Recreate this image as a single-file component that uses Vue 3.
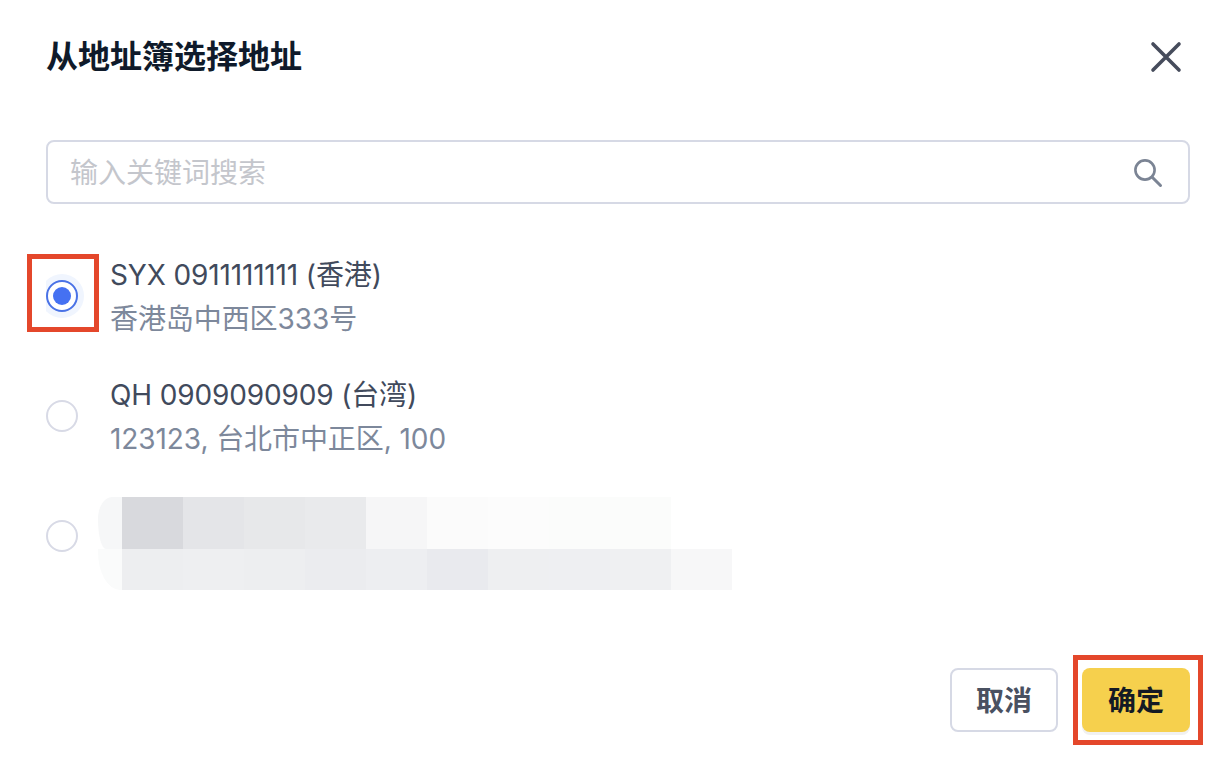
<script setup>
const addresses = [
  { id: 1, name: 'SYX 0911111111 (香港)', detail: '香港岛中西区333号', selected: true },
  { id: 2, name: 'QH 0909090909 (台湾)', detail: '123123, 台北市中正区, 100', selected: false }
]
const topCells = ['#d8d9dd', '#e4e5e8', '#e7e8ea', '#e9eaec', '#f6f6f7', '#fbfbfb', '#fcfcfc', '#fbfcfb', '#fbfcfb', '#ffffff']
const bottomCells = ['#edeef0', '#eeeff1', '#edeef0', '#ebecef', '#edeef1', '#e9eaee', '#eeeff1', '#eeeff2', '#eff0f2', '#f7f7f8']
</script>

<template>
  <div class="dialog">
    <header class="head">
      <h1 class="title">从地址簿选择地址</h1>
      <svg class="close" width="32" height="32" viewBox="0 0 32 32" aria-label="关闭">
        <path d="M3 3 L29 29 M29 3 L3 29" fill="none" stroke="#464c5c" stroke-width="3.6" stroke-linecap="round" />
      </svg>
    </header>

    <div class="search">
      <span class="placeholder">输入关键词搜索</span>
      <svg class="search-icon" width="32" height="32" viewBox="0 0 32 32" aria-hidden="true">
        <circle cx="13" cy="13" r="9.6" fill="none" stroke="#7b8494" stroke-width="2.6" />
        <path d="M20 20 L28.5 28.5" fill="none" stroke="#7b8494" stroke-width="3" stroke-linecap="round" />
      </svg>
    </div>

    <ul class="list">
      <li v-for="item in addresses" :key="item.id" class="row">
        <span class="radio-wrap">
          <span v-if="item.selected" class="halo"></span>
          <span class="radio" :class="{ on: item.selected }"></span>
          <span v-if="item.selected" class="mark mark-radio"></span>
        </span>
        <div class="text">
          <div class="name">{{ item.name }}</div>
          <div class="detail">{{ item.detail }}</div>
        </div>
      </li>
      <li class="row">
        <span class="radio-wrap"><span class="radio"></span></span>
        <div class="mosaic">
          <div class="mosaic-cap">
            <span class="cap-top"></span>
            <span class="cap-bottom"></span>
          </div>
          <div class="mosaic-grid">
            <span v-for="(c, i) in topCells" :key="'t' + i" class="cell top" :style="{ background: c }"></span>
            <span v-for="(c, i) in bottomCells" :key="'b' + i" class="cell bottom" :style="{ background: c }"></span>
          </div>
        </div>
      </li>
    </ul>

    <footer class="foot">
      <button class="btn cancel" type="button">取消</button>
      <span class="confirm-wrap">
        <button class="btn confirm" type="button">确定</button>
        <span class="mark mark-btn"></span>
      </span>
    </footer>
  </div>
</template>

<style scoped>
.dialog {
  box-sizing: border-box;
  width: 1232px;
  height: 760px;
  padding: 36px 42px 0 46px;
  background: #fff;
  overflow: hidden;
  font-family: Inter, "Noto Sans CJK SC", sans-serif;
}
.head {
  display: flex;
  justify-content: space-between;
  align-items: center;
  height: 42px;
  padding-right: 8px;
}
.title {
  margin: 0;
  font-size: 32px;
  line-height: 42px;
  font-weight: 700;
  color: #0f1a2a;
}
.close {
  display: block;
}
.search {
  box-sizing: border-box;
  display: flex;
  justify-content: space-between;
  align-items: center;
  height: 64px;
  margin-top: 62px;
  padding: 0 24px 0 22px;
  border: 2px solid #d6d9e5;
  border-radius: 8px;
}
.placeholder {
  margin-top: 2px;
  font-size: 28px;
  line-height: 42px;
  color: #c4c6cc;
}
.search-icon {
  display: block;
  margin-top: 2px;
}
.list {
  list-style: none;
  margin: 40px 0 0;
  padding: 0;
}
.row {
  display: flex;
  align-items: center;
  gap: 32px;
  height: 104px;
  margin-bottom: 16px;
}
.radio-wrap {
  position: relative;
  display: flex;
  flex: none;
  width: 32px;
  height: 32px;
}
.radio {
  box-sizing: border-box;
  position: relative;
  width: 32px;
  height: 32px;
  border: 2px solid #d8dae6;
  border-radius: 50%;
  background: #fff;
}
.radio.on {
  border-color: #4a72e6;
}
.radio.on::after {
  content: "";
  position: absolute;
  top: 5px;
  left: 5px;
  width: 18px;
  height: 18px;
  border-radius: 50%;
  background: #4571f2;
}
.halo {
  position: absolute;
  top: -6px;
  left: -6px;
  width: 44px;
  height: 44px;
  border-radius: 50%;
  background: #f0f5fe;
  clip-path: inset(0 0 0 6px);
}
.mark {
  position: absolute;
  box-sizing: border-box;
  border: 5px solid #e4472b;
  pointer-events: none;
}
.mark-radio {
  top: -26px;
  left: -19px;
  width: 72px;
  height: 78px;
}
.text {
  padding-top: 2px;
}
.name {
  font-size: 28px;
  line-height: 44px;
  letter-spacing: -0.14px;
  color: #414a5c;
}
.detail {
  font-size: 28px;
  line-height: 44px;
  letter-spacing: -0.08px;
  color: #7d889b;
}
.mosaic {
  display: flex;
  margin: 14px 0 0 -12px;
}
.mosaic-cap {
  display: flex;
  flex-direction: column;
  width: 24px;
}
.cap-top {
  height: 52px;
  background: #f6f7f8;
  border-radius: 14px 0 0 8px / 22px 0 0 30px;
}
.cap-bottom {
  height: 41px;
  background: #fafbfb;
  border-radius: 0 0 0 22px / 0 0 0 38px;
}
.mosaic-grid {
  display: grid;
  grid-template-columns: repeat(10, 61px);
  grid-template-rows: 52px 41px;
}
.foot {
  display: flex;
  justify-content: flex-end;
  gap: 24px;
  margin-top: 80px;
}
.btn {
  box-sizing: border-box;
  width: 108px;
  height: 64px;
  padding: 0 0 2px;
  border-radius: 8px;
  font-family: inherit;
  font-size: 28px;
  font-weight: 700;
  letter-spacing: 0;
}
.cancel {
  border: 2px solid #d6d9e5;
  background: #fff;
  color: #4a5161;
}
.confirm-wrap {
  position: relative;
  display: flex;
}
.confirm {
  border: 0;
  background: #f6d04d;
  color: #141a24;
  box-shadow: 0 3px 0 #f1f1f1;
}
.mark-btn {
  top: -13px;
  left: -9px;
  width: 130px;
  height: 90px;
}
</style>

<style>
body {
  background: #fff;
}
</style>
